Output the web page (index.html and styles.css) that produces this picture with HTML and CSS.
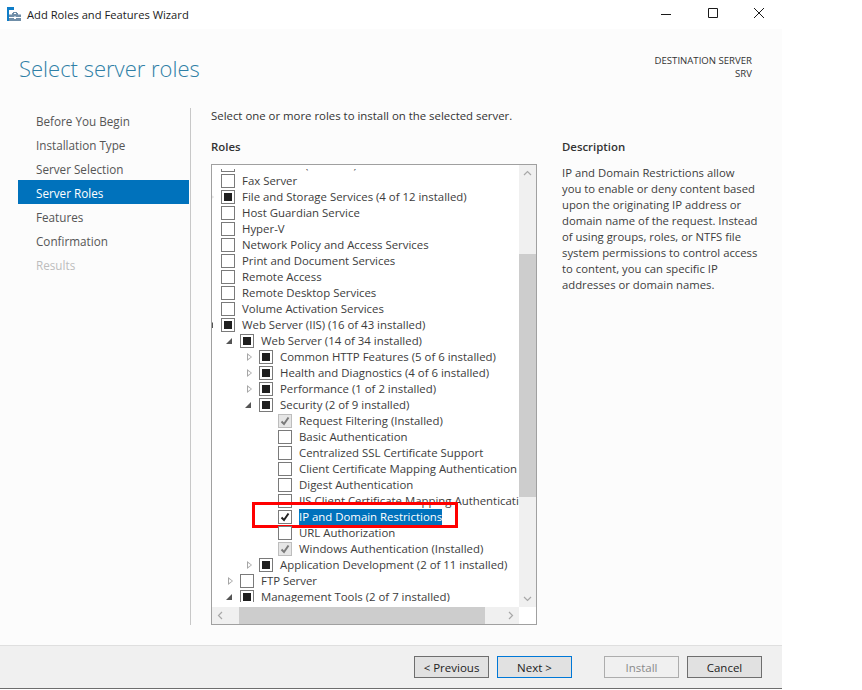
FILE: index.html
```html
<!DOCTYPE html>
<html lang="en">
<head>
<meta charset="utf-8">
<title>Add Roles and Features Wizard</title>
<link rel="stylesheet" href="styles.css">
</head>
<body>
<div class="window">
  <header class="titlebar">
    <svg class="app-icon" width="15" height="15" viewBox="0 0 15 15"><path fill="#0f7dc8" d="M0 0h7v3H2v11H0z"/><path fill="#6f8ea8" d="M2 7.500h3V6h1V5h4v1h1v1.500h3V14H2z"/><path fill="#fff" d="M7 6h2v1H7zM2 10h12v1H2z"/><path fill="#fff" d="M7 9.500h2v2.500H7z"/></svg>
    <span class="title">Add Roles and Features Wizard</span>
    <div class="controls">
      <svg width="12" height="12" viewBox="0 0 12 12"><path stroke="#1a1a1a" fill="none" d="M1 7.500h10"/></svg>
      <svg width="12" height="12" viewBox="0 0 12 12"><path stroke="#1a1a1a" fill="none" d="M1.500 1.500h9v9h-9z"/></svg>
      <svg width="12" height="12" viewBox="0 0 12 12"><path stroke="#1a1a1a" fill="none" d="M1 1l10 10M11 1L1 11"/></svg>
    </div>
  </header>
  <main class="content">
    <div class="heading">
      <h1>Select server roles</h1>
      <div class="dest"><div>DESTINATION SERVER</div><div>SRV</div></div>
    </div>
    <div class="columns">
      <nav class="nav">
        <div class="nav-item">Before You Begin</div>
        <div class="nav-item">Installation Type</div>
        <div class="nav-item">Server Selection</div>
        <div class="nav-item active">Server Roles</div>
        <div class="nav-item">Features</div>
        <div class="nav-item">Confirmation</div>
        <div class="nav-item disabled">Results</div>
      </nav>
      <section class="main">
        <p class="intro">Select one or more roles to install on the selected server.</p>
        <div class="panes">
          <div class="roles">
            <h2>Roles</h2>
            <div class="listbox">
              <div class="list-area">
                <div class="list">
                  <div class="row l0 first"><i class="arrow"></i><b class="cb"></b><span class="lbl">DNS Server (Installed)</span></div>
                  <div class="row l0"><i class="arrow"></i><b class="cb"></b><span class="lbl">Fax Server</span></div>
                  <div class="row l0"><i class="arrow closed faint"></i><b class="cb partial"></b><span class="lbl">File and Storage Services (4 of 12 installed)</span></div>
                  <div class="row l0"><i class="arrow"></i><b class="cb"></b><span class="lbl">Host Guardian Service</span></div>
                  <div class="row l0"><i class="arrow"></i><b class="cb"></b><span class="lbl">Hyper-V</span></div>
                  <div class="row l0"><i class="arrow"></i><b class="cb"></b><span class="lbl">Network Policy and Access Services</span></div>
                  <div class="row l0"><i class="arrow"></i><b class="cb"></b><span class="lbl">Print and Document Services</span></div>
                  <div class="row l0"><i class="arrow"></i><b class="cb"></b><span class="lbl">Remote Access</span></div>
                  <div class="row l0"><i class="arrow"></i><b class="cb"></b><span class="lbl">Remote Desktop Services</span></div>
                  <div class="row l0"><i class="arrow"></i><b class="cb"></b><span class="lbl">Volume Activation Services</span></div>
                  <div class="row l0"><i class="arrow open"></i><b class="cb partial"></b><span class="lbl">Web Server (IIS) (16 of 43 installed)</span></div>
                  <div class="row l1"><i class="arrow open"></i><b class="cb partial"></b><span class="lbl">Web Server (14 of 34 installed)</span></div>
                  <div class="row l2"><i class="arrow closed"></i><b class="cb partial"></b><span class="lbl">Common HTTP Features (5 of 6 installed)</span></div>
                  <div class="row l2"><i class="arrow closed"></i><b class="cb partial"></b><span class="lbl">Health and Diagnostics (4 of 6 installed)</span></div>
                  <div class="row l2"><i class="arrow closed"></i><b class="cb partial"></b><span class="lbl">Performance (1 of 2 installed)</span></div>
                  <div class="row l2"><i class="arrow open"></i><b class="cb partial"></b><span class="lbl">Security (2 of 9 installed)</span></div>
                  <div class="row l3"><i class="arrow"></i><b class="cb grey"><svg width="12" height="12" viewBox="0 0 12 12"><path fill="none" stroke="#7a7a7a" stroke-width="2" d="M2.500 6.500l2.500 2.500 4.500-6.500"/></svg></b><span class="lbl">Request Filtering (Installed)</span></div>
                  <div class="row l3"><i class="arrow"></i><b class="cb"></b><span class="lbl">Basic Authentication</span></div>
                  <div class="row l3"><i class="arrow"></i><b class="cb"></b><span class="lbl">Centralized SSL Certificate Support</span></div>
                  <div class="row l3"><i class="arrow"></i><b class="cb"></b><span class="lbl">Client Certificate Mapping Authentication</span></div>
                  <div class="row l3"><i class="arrow"></i><b class="cb"></b><span class="lbl">Digest Authentication</span></div>
                  <div class="row l3"><i class="arrow"></i><b class="cb"></b><span class="lbl">IIS Client Certificate Mapping Authentication</span></div>
                  <div class="row l3 marked"><i class="arrow"></i><b class="cb"><svg width="12" height="12" viewBox="0 0 12 12"><path fill="none" stroke="#222" stroke-width="2" d="M2.500 6.500l2.500 2.500 4.500-6.500"/></svg></b><span class="lbl selected">IP and Domain Restrictions</span><div class="redbox"></div></div>
                  <div class="row l3"><i class="arrow"></i><b class="cb"></b><span class="lbl">URL Authorization</span></div>
                  <div class="row l3"><i class="arrow"></i><b class="cb grey"><svg width="12" height="12" viewBox="0 0 12 12"><path fill="none" stroke="#7a7a7a" stroke-width="2" d="M2.500 6.500l2.500 2.500 4.500-6.500"/></svg></b><span class="lbl">Windows Authentication (Installed)</span></div>
                  <div class="row l2"><i class="arrow closed"></i><b class="cb partial"></b><span class="lbl">Application Development (2 of 11 installed)</span></div>
                  <div class="row l1"><i class="arrow closed"></i><b class="cb"></b><span class="lbl">FTP Server</span></div>
                  <div class="row l1"><i class="arrow open"></i><b class="cb partial"></b><span class="lbl">Management Tools (2 of 7 installed)</span></div>
                </div>
              </div>
              <div class="vscroll">
                <svg class="sb-btn" width="17" height="17" viewBox="0 0 17 17"><path fill="none" stroke="#a8a8a8" stroke-width="1.200" d="M5 10l3.500-3.500L12 10"/></svg>
                <div class="vtrack"><div class="vthumb"></div></div>
                <svg class="sb-btn" width="17" height="17" viewBox="0 0 17 17"><path fill="none" stroke="#a8a8a8" stroke-width="1.200" d="M5 7l3.500 3.500L12 7"/></svg>
              </div>
              <div class="hscroll">
                <svg class="sb-btn" width="17" height="17" viewBox="0 0 17 17"><path fill="none" stroke="#a8a8a8" stroke-width="1.200" d="M10 5L6.500 8.500 10 12"/></svg>
                <div class="htrack"><div class="hthumb"></div></div>
                <svg class="sb-btn" width="17" height="17" viewBox="0 0 17 17"><path fill="none" stroke="#a8a8a8" stroke-width="1.200" d="M7 5l3.500 3.500L7 12"/></svg>
              </div>
            </div>
          </div>
          <aside class="desc">
            <h2>Description</h2>
            <p>IP and Domain Restrictions allow<br>you to enable or deny content based<br>upon the originating IP address or<br>domain name of the request. Instead<br>of using groups, roles, or NTFS file<br>system permissions to control access<br>to content, you can specific IP<br>addresses or domain names.</p>
          </aside>
        </div>
      </section>
    </div>
  </main>
  <footer class="footer">
    <button class="btn">&lt; Previous</button>
    <button class="btn primary">Next &gt;</button>
    <button class="btn off">Install</button>
    <button class="btn">Cancel</button>
  </footer>
</div>
</body>
</html>
```
FILE: styles.css
```css
* { box-sizing: border-box; }
html, body { margin: 0; padding: 0; background: #fff; }
body { font-family: "Open Sans", "Liberation Sans", sans-serif; font-size: 11.4px; color: #3c3c3c; }
.window { width: 782px; height: 689px; display: flex; flex-direction: column; background: #fcfcfc; }
.titlebar { height: 29px; flex: none; background: #fff; display: flex; align-items: center; padding-left: 7px; }
.app-icon { flex: none; margin-top: -1px; }
.title { margin-left: 5px; color: #1c1c1c; font-size: 11.2px; }
.controls { margin-left: auto; display: flex; gap: 34px; padding-right: 17px; margin-top: -4px; }
.controls svg:first-child { margin-right: 1px; }
.content { flex: 1; min-height: 0; display: flex; flex-direction: column; }
.heading { height: 79px; flex: none; display: flex; justify-content: space-between; padding: 23px 30px 0 19px; }
h1 { margin: 0; font-size: 22px; font-weight: 300; line-height: 32px; color: #2f7fa6; }
.dest { font-size: 9.6px; line-height: 13px; text-align: right; color: #333; padding-top: 2px; }
.columns { display: flex; flex: 1; min-height: 0; }
.nav { width: 172px; margin-left: 18px; flex: none; }
.nav-item { width: 171px; height: 24px; line-height: 24px; padding: 1px 0 0 18px; color: #555; font-size: 11.7px; }
.nav-item.active { background: #0072bc; color: #fff; }
.nav-item.disabled { color: #bdbdbd; }
.main { flex: 1; border-left: 1px solid #c8c8c8; margin-bottom: 20px; padding-left: 20px; display: flex; flex-direction: column; }
.intro { margin: 0; height: 32px; line-height: 16px; color: #333; }
.panes { display: flex; flex: 1; min-height: 0; }
.roles { width: 326px; flex: none; display: flex; flex-direction: column; }
h2 { margin: 0; height: 24px; font-size: 11.4px; font-weight: 600; line-height: 14px; color: #333; }
.listbox { flex: 1; min-height: 0; border: 1px solid #a0a0a0; background: #fff; display: grid; grid-template-columns: 1fr 17px; grid-template-rows: 1fr 17px; }
.list-area { overflow: hidden; padding-top: 4px; padding-bottom: 5px; min-width: 0; min-height: 0; }
.list { height: 100%; overflow: hidden; }
.row { position: relative; display: flex; align-items: center; height: 16px; white-space: nowrap; color: #3c3c3c; }
.row.first { margin-top: -12px; }
.row.l0 { margin-left: -5px; }
.row.l1 { margin-left: 14px; }
.row.l2 { margin-left: 33px; }
.row.l3 { margin-left: 52px; }
.arrow { width: 14px; height: 16px; flex: none; position: relative; display: block; }
.arrow.closed::before { content: ""; position: absolute; left: 2px; top: 4px; border-left: 5px solid #a6a6a6; border-top: 4px solid transparent; border-bottom: 4px solid transparent; }
.arrow.closed::after { content: ""; position: absolute; left: 3px; top: 5.500px; border-left: 3px solid #fff; border-top: 2.500px solid transparent; border-bottom: 2.500px solid transparent; }
.arrow.open::before { content: ""; position: absolute; left: 0; top: 5px; border-right: 6px solid #555; border-top: 6px solid transparent; }
.arrow.closed.faint::before { border-left-color: #d8d8d8; }
.cb { width: 14px; height: 14px; flex: none; border: 1px solid #7a7a7a; background: #fff; display: flex; align-items: center; justify-content: center; }
.cb.partial::before { content: ""; width: 8px; height: 8px; background: #1f1f1f; }
.cb.grey { background: #e6e6e6; border-color: #bdbdbd; }
.lbl { margin-left: 7px; line-height: 16px; }
.lbl.selected { background: #0072bc; color: #fff; height: 16px; margin-left: 7px; }
.redbox { position: absolute; left: -12px; top: -7px; width: 206px; height: 26px; border: 3px solid #f00; }
.vscroll { grid-column: 2; grid-row: 1; background: #f0f0f0; display: flex; flex-direction: column; }
.vtrack { flex: 1; min-height: 0; padding-top: 72px; padding-bottom: 93px; display: flex; }
.vthumb { flex: 1; background: #cdcdcd; }
.hscroll { grid-column: 1; grid-row: 2; background: #f0f0f0; display: flex; }
.htrack { flex: 1; padding-left: 10px; padding-right: 17px; display: flex; }
.hthumb { flex: 1; background: #cdcdcd; }
.sb-btn { display: block; flex: none; }
.desc { padding-left: 25px; flex: 1; }
.desc p { margin: 0; padding-top: 1px; font-size: 11.3px; line-height: 16px; color: #3c3c3c; }
.footer { height: 44px; flex: none; background: #f0f0f0; border-top: 1px solid #dfdfdf; border-bottom: 1px solid #6d6d6d; display: flex; align-items: flex-start; padding: 10px 20px 0 414px; gap: 8px; }
.btn { width: 75px; height: 22px; padding: 0; border: 1px solid #6e6e6e; background: #e1e1e1; font: 11.5px "Open Sans", "Liberation Sans", sans-serif; color: #222; }
.btn.primary { border-color: #0078d7; }
.btn.off { margin-left: 24px; background: #f0f0f0; border-color: #adadad; color: #8a8a8a; }
```
